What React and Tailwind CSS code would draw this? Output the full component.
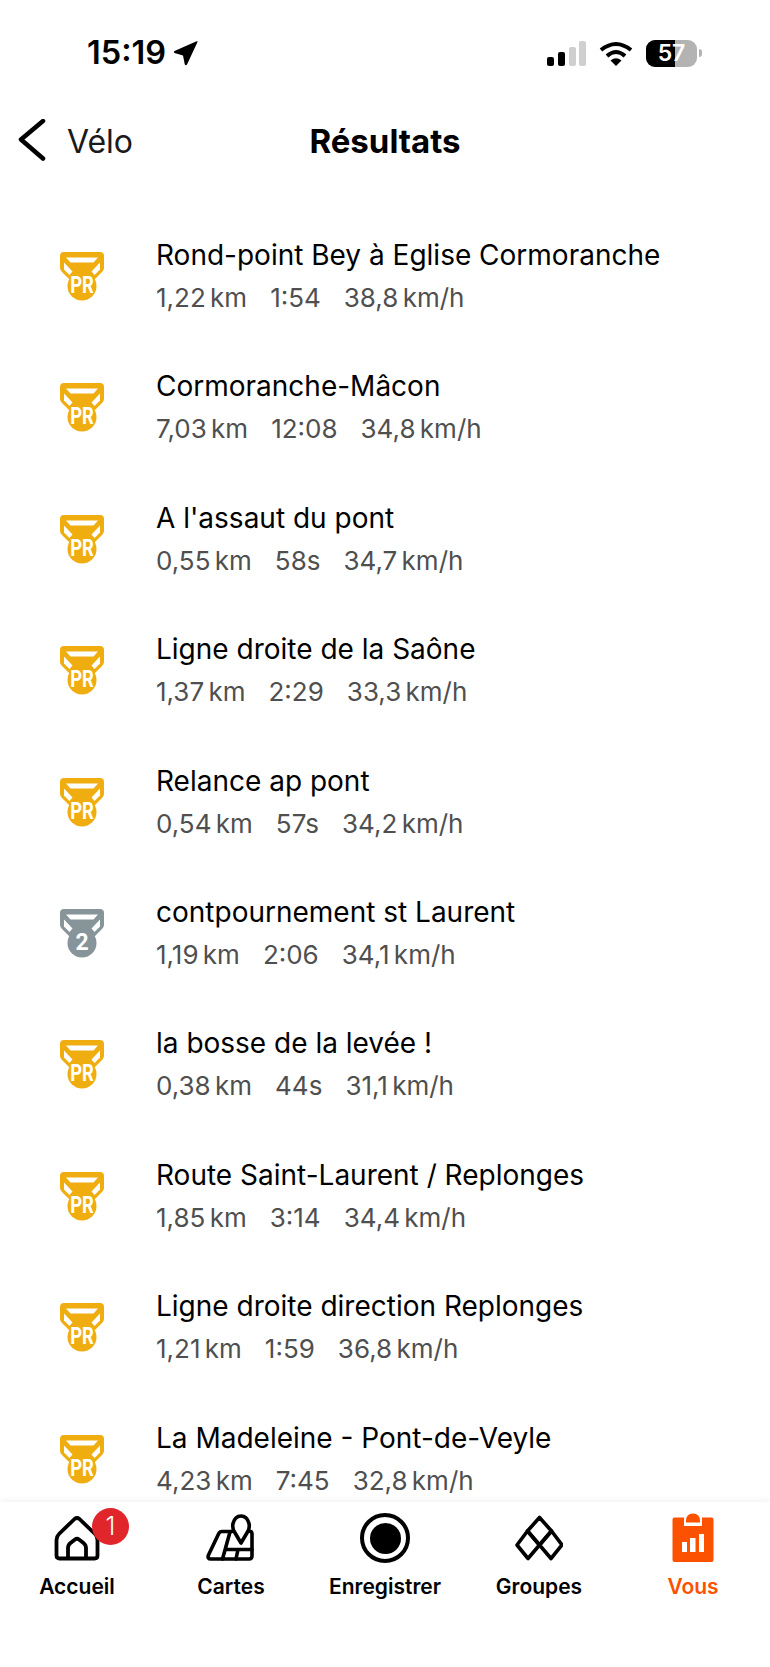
const results = [
  { name: 'Rond-point Bey à Eglise Cormoranche', dist: '1,22 km', time: '1:54', speed: '38,8 km/h', medal: 'pr' },
  { name: 'Cormoranche-Mâcon', dist: '7,03 km', time: '12:08', speed: '34,8 km/h', medal: 'pr' },
  { name: "A l'assaut du pont", dist: '0,55 km', time: '58s', speed: '34,7 km/h', medal: 'pr' },
  { name: 'Ligne droite de la Saône', dist: '1,37 km', time: '2:29', speed: '33,3 km/h', medal: 'pr' },
  { name: 'Relance ap pont', dist: '0,54 km', time: '57s', speed: '34,2 km/h', medal: 'pr' },
  { name: 'contpournement st Laurent', dist: '1,19 km', time: '2:06', speed: '34,1 km/h', medal: '2' },
  { name: 'la bosse de la levée !', dist: '0,38 km', time: '44s', speed: '31,1 km/h', medal: 'pr' },
  { name: 'Route Saint-Laurent / Replonges', dist: '1,85 km', time: '3:14', speed: '34,4 km/h', medal: 'pr' },
  { name: 'Ligne droite direction Replonges', dist: '1,21 km', time: '1:59', speed: '36,8 km/h', medal: 'pr' },
  { name: 'La Madeleine - Pont-de-Veyle', dist: '4,23 km', time: '7:45', speed: '32,8 km/h', medal: 'pr' },
]

function Medal({ type }) {
  const isPr = type === 'pr'
  const color = isPr ? '#f0ad10' : '#87949a'
  return (
    <div className="relative w-[44px] h-[49px] shrink-0">
      <svg width="44" height="49" viewBox="0 0 44 49">
        <path d="M0 4 Q0 0 4 0 H40 Q44 0 44 4 V16 Q44 18 42 20 L31 31 H13 L2 20 Q0 18 0 16 Z" fill={color} />
        <path d="M6 5.500 H38 L33.500 10.500 H10.500 Z" fill="white" />
        <path d="M4 10.500 L12.500 19.500 L9.500 23 L4 17.500 Z" fill="white" />
        <path d="M40 10.500 L31.500 19.500 L34.500 23 L40 17.500 Z" fill="white" />
        <circle cx="22" cy="34" r="14.500" fill={color} />
      </svg>
      <span className={`absolute left-0 right-0 top-[22px] text-center text-white font-bold leading-[24px] text-[23px] font-['Roboto',sans-serif] ${isPr ? 'scale-x-80' : 'scale-x-100'}`}>
        {isPr ? 'PR' : '2'}
      </span>
    </div>
  )
}

function HomeIcon() {
  return (
    <svg width="46" height="46" viewBox="0 0 46 46" fill="none" stroke="black" strokeWidth="3.800" strokeLinejoin="round">
      <path d="M2.500 25 Q2.500 21.500 5 19 L20.500 4 Q23 2 25.500 4 L41 19 Q43.500 21.500 43.500 25 V40.500 Q43.500 43.500 40.500 43.500 H5.500 Q2.500 43.500 2.500 40.500 Z" />
      <path d="M14 43.500 V33 Q14 30 16.500 28 L21 24.500 Q23 23 25 24.500 L29.500 28 Q32 30 32 33 V43.500" />
    </svg>
  )
}

function MapIcon() {
  return (
    <svg width="48" height="48" viewBox="0 0 48 48" fill="none" stroke="black" strokeWidth="3.600" strokeLinejoin="round" strokeLinecap="round" className="-ml-[3px]">
      <path d="M26 17.500 H16 Q14 17.500 13 19 L2.500 41 Q1 45 5 45 H43 Q46 45 46 42 V20 Q46 18 44.500 17.500" />
      <path d="M35 29 L28.500 18 Q26 14 27 9.500 Q29 2 35 2 Q41 2 43 9.500 Q44 14 41.500 18 Z" />
      <path d="M24 18 L16.500 45 M20 35.500 H46 M32 35.500 L30 45" />
    </svg>
  )
}

function RecordIcon() {
  return (
    <div className="w-[50px] h-[50px] rounded-full border-[4px] border-black flex items-center justify-center">
      <div className="w-[31px] h-[31px] rounded-full bg-black" />
    </div>
  )
}

function GroupIcon() {
  return (
    <svg width="48" height="46" viewBox="0 0 48 46" fill="none" stroke="black" strokeWidth="3.600" strokeLinejoin="round">
      <path d="M24.500 2.500 L36.500 16 L24.500 30 L12.500 16 Z" />
      <path d="M12.500 16 L24.500 30 L13 43.500 L2 30 Z" />
      <path d="M36.500 16 L47 30 L36 43.500 L24.500 30 Z" />
    </svg>
  )
}

function YouIcon() {
  return (
    <svg width="42" height="50" viewBox="0 0 42 50" fill="#fc5200">
      <path d="M2.500 4.500 H12 V13 H30 V4.500 H39.500 Q41.500 4.500 41.500 6.500 V47 Q41.500 49 39.500 49 H2.500 Q0.500 49 0.500 47 V6.500 Q0.500 4.500 2.500 4.500 Z" />
      <path d="M14 9.500 V8 Q14 0.500 21 0.500 Q28 0.500 28 8 V9.500 Z" />
      <rect x="10" y="29" width="5" height="10" fill="white" />
      <rect x="18" y="25" width="5.500" height="14" fill="white" />
      <rect x="27" y="21" width="5" height="18" fill="white" />
    </svg>
  )
}

function TabItem({ label, active, children }) {
  return (
    <div className="w-[154px] flex flex-col items-center">
      <div className="h-[50px] flex items-center justify-center">{children}</div>
      <span className={`mt-[11px] text-[21px] leading-[26px] font-semibold whitespace-nowrap ${active ? 'text-[#fc5200]' : 'text-black'}`}>{label}</span>
    </div>
  )
}

export default function App() {
  return (
    <div className="w-[770px] h-[1667px] bg-white flex flex-col overflow-hidden font-['Inter',sans-serif] text-black">
      {/* Status bar */}
      <div className="h-[104px] shrink-0 pt-[34px] pl-[87px] pr-[68px] flex justify-between items-start">
        <div className="flex items-center gap-[7px]">
          <span className="text-[32.500px] leading-[38px] font-semibold">15:19</span>
          <svg width="25" height="25" viewBox="0 0 25 25" fill="black">
            <path d="M24.500 1 L14 23.500 Q13 25 11.800 23.500 L10 14.500 L1.500 12 Q0 11 1.500 10 L23 0.500 Q25 0 24.500 1 Z" />
          </svg>
        </div>
        <div className="flex items-center gap-[13px] h-[38px]">
          <svg width="39" height="25" viewBox="0 0 39 25">
            <rect x="0" y="16" width="7" height="9" rx="2" fill="black" />
            <rect x="11" y="11" width="7" height="14" rx="2" fill="black" />
            <rect x="22" y="6" width="7" height="19" rx="2" fill="#cfcfcf" />
            <rect x="32" y="0" width="7" height="25" rx="2" fill="#cfcfcf" />
          </svg>
          <svg width="34" height="25" viewBox="0 0 34 25" fill="none" stroke="black" strokeWidth="4">
            <path d="M2 9 Q17 -3 32 9" />
            <path d="M8 15 Q17 7 26 15" />
            <path d="M17 25 L11.500 19.500 Q17 15 22.500 19.500 Z" fill="black" stroke="none" />
          </svg>
          <div className="flex items-center">
            <div className="relative w-[51px] h-[27px] rounded-[9px] overflow-hidden bg-[#b3b3b3] flex">
              <div className="w-[29px] bg-black" />
              <span className="absolute inset-0 text-center text-white text-[23px] leading-[27px] font-semibold">57</span>
            </div>
            <div className="ml-[2px] w-[3px] h-[8px] rounded-r-full bg-[#b3b3b3]" />
          </div>
        </div>
      </div>

      {/* Nav */}
      <div className="relative h-[76px] shrink-0 flex items-center justify-center">
        <div className="absolute left-[17px] top-0 h-full flex items-center">
          <svg width="30" height="46" viewBox="0 0 30 46" fill="none" stroke="black" strokeWidth="4.500" strokeLinecap="round" strokeLinejoin="round">
            <path d="M26 2 L4 20.500 L26 39.500" />
          </svg>
          <span className="ml-[20px] text-[32px] text-[#1a1a1a]">Vélo</span>
        </div>
        <h1 className="text-[33px] font-bold">Résultats</h1>
      </div>

      {/* Results */}
      <div className="flex-1 min-h-0 overflow-hidden pt-[56px]">
        {results.map(r => (
          <div key={r.name} className="h-[131.400px] flex items-start pl-[60px]">
            <div className="pt-[16px] mr-[52px]"><Medal type={r.medal} /></div>
            <div>
              <p className="text-[28px] leading-[38px] whitespace-nowrap">{r.name}</p>
              <div className="mt-[8px] flex gap-[23px] text-[26px] leading-[32px] text-[#4f4f4f] whitespace-nowrap [word-spacing:-3px]">
                <span>{r.dist}</span>
                <span>{r.time}</span>
                <span>{r.speed}</span>
              </div>
            </div>
          </div>
        ))}
      </div>

      {/* Tab bar */}
      <div className="relative h-[165px] shrink-0 bg-white flex pt-[11px] shadow-[0_-3px_5px_rgba(0,0,0,0.04)]">
        <TabItem label="Accueil">
          <div className="relative">
            <HomeIcon />
            <div className="absolute -top-[7px] left-[38px] w-[37px] h-[37px] rounded-full bg-[#e0262b] text-white text-[25px] leading-[37px] text-center font-light">1</div>
          </div>
        </TabItem>
        <TabItem label="Cartes"><MapIcon /></TabItem>
        <TabItem label="Enregistrer"><RecordIcon /></TabItem>
        <TabItem label="Groupes"><GroupIcon /></TabItem>
        <TabItem label="Vous" active><YouIcon /></TabItem>
      </div>
    </div>
  )
}
